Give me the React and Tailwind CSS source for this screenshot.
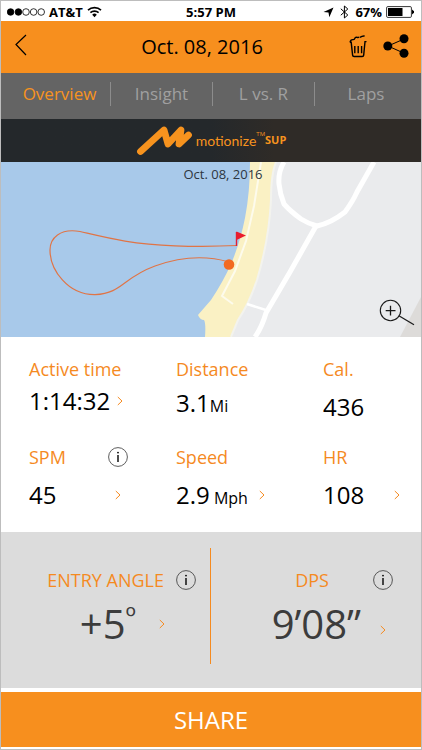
import React, { useState } from 'react';

/* ─── Data ──────────────────────────────────────────────────── */
const TABS = ['Overview', 'Insight', 'L vs. R', 'Laps'];

const METRICS = [
  { label: 'Active time', value: '1:14:32', link: true, cell: 'pr-12', gap: 'gap-0' },
  { label: 'Distance', value: '3.1', unit: 'Mi', cell: 'pr-[51px]', gap: 'gap-0.5' },
  { label: 'Cal.', value: '436', cell: 'pr-3.5', gap: 'gap-1.5' },
  { label: 'SPM', value: '45', info: true, link: true, cell: 'pr-12', gap: 'gap-1.5' },
  { label: 'Speed', value: '2.9', unit: ' Mph', link: true, cell: 'pr-[51px]', gap: 'gap-1.5' },
  { label: 'HR', value: '108', link: true, cell: 'pr-3.5', gap: 'gap-1.5' },
];

/* ─── Icons ─────────────────────────────────────────────────── */
const WifiIcon = () => (
  <svg width="15" height="12" viewBox="0 0 15 12" fill="none" stroke="black" strokeWidth="1.6">
    <path d="M1 4.2a9.4 9.4 0 0 1 13 0" />
    <path d="M3.4 6.7a6 6 0 0 1 8.2 0" />
    <path d="M7.5 11.2 5.2 8.7a3.3 3.3 0 0 1 4.6 0z" fill="black" stroke="none" />
  </svg>
);

const LocationIcon = () => (
  <svg width="11" height="11" viewBox="0 0 11 11">
    <path d="M10.5.5 6.3 10.3 5.5 5.6.5 5z" fill="black" />
  </svg>
);

const BluetoothIcon = () => (
  <svg width="9" height="14" viewBox="0 0 9 14" fill="none" stroke="black" strokeWidth="1">
    <path d="M.8 3.8 7.8 10 4.4 13V1l3.4 3-7 6.2" />
  </svg>
);

const BatteryIcon = () => (
  <svg width="29" height="12" viewBox="0 0 29 12">
    <rect x=".6" y=".6" width="24.8" height="10.8" rx="1.2" fill="white" stroke="black" strokeWidth=".8" />
    <rect x="2" y="2" width="14.5" height="8" fill="black" />
    <path d="M26.5 4.2a2 2 0 0 1 0 3.6z" fill="black" stroke="black" />
  </svg>
);

const BackIcon = () => (
  <svg width="12" height="22" viewBox="0 0 12 22" fill="none" stroke="black" strokeWidth="1.2">
    <path d="M11 1 1 10.5 11 21" />
  </svg>
);

const TrashIcon = () => (
  <svg width="18" height="24" viewBox="0 0 18 24" fill="none" stroke="black" strokeWidth="1.4">
    <path d="M.8 8.3h1.4l1.4 12.8q.1 1.4 1.5 1.4h8.1q1.4 0 1.5-1.4L16 7.6h1.5" />
    <path d="M1.2 8q.3-2.5 2.7-2.4 1.7.2 1.9-1.2.6-1.7 2.5-1 1 .5 1.9-.5" />
    <path d="M11 3.4q2.2-1.7 4.6-1.4" />
    <path d="M5.8 12v7.3M9.2 12v7.3M12.6 12v7.3" />
  </svg>
);

const ShareIcon = () => (
  <svg width="26" height="24" viewBox="0 0 26 24">
    <path d="M21 5 5 12l16 7.2" fill="none" stroke="black" strokeWidth="1" />
    <circle cx="4.8" cy="12" r="4.5" />
    <circle cx="21" cy="4.8" r="4.5" />
    <circle cx="21" cy="19.2" r="4.5" />
  </svg>
);

const MotionizeMark = () => (
  <svg width="58" height="31" viewBox="0 0 58 31" fill="none" stroke="#f7931e" strokeLinejoin="round" strokeLinecap="round">
    <path d="M4.500 26.500 28 5l4 14L45 5l-2 14 9.500-9" strokeWidth="6.800" />
  </svg>
);

const ChevronIcon = () => (
  <svg width="6" height="10" viewBox="0 0 6 10" fill="none" stroke="#f58a1f" strokeWidth="1">
    <path d="M.8 1 5 5 .8 9" />
  </svg>
);

const InfoIcon = () => (
  <svg width="20" height="20" viewBox="0 0 20 20" fill="none" stroke="#333">
    <circle cx="10" cy="10" r="9.4" strokeWidth=".8" />
    <path d="M10 8v7" stroke="black" strokeWidth="1.4" />
    <circle cx="10" cy="5.6" r=".9" fill="black" stroke="none" />
  </svg>
);

const ZoomIcon = () => (
  <svg width="36" height="28" viewBox="0 0 36 28" fill="none" stroke="#1a1a1a">
    <circle cx="11.5" cy="11.5" r="10.2" strokeWidth="1.1" />
    <path d="M11.5 6.7v9.8M6.7 11.6h9.8" strokeWidth="1.3" />
    <path d="M20.3 17 35 25.7" strokeWidth="1.3" />
  </svg>
);

/* ─── Small controls ────────────────────────────────────────── */
const DetailsButton = ({ label }) => (
  <button className="flex w-5 h-5 shrink-0 items-center justify-center" aria-label={`${label} details`}>
    <ChevronIcon />
  </button>
);

const InfoButton = ({ label }) => (
  <button className="shrink-0" aria-label={`About ${label}`}>
    <InfoIcon />
  </button>
);

/* ─── Status bar ────────────────────────────────────────────── */
const StatusBar = () => (
  <div className="grid grid-cols-3 items-center h-5 px-1.5 pt-0.5 text-[13px] leading-4 font-bold text-black">
    <div className="flex items-center gap-1">
      <svg width="38" height="8" viewBox="0 0 38 8" stroke="black" strokeWidth=".8">
        {[3.6, 11.4, 19, 26.6, 34.2].map((x, i) => (
          <circle key={x} cx={x} cy="4" r="3.3" fill={i < 2 ? 'black' : 'white'} />
        ))}
      </svg>
      <span>AT&amp;T</span>
      <span><WifiIcon /></span>
    </div>
    <span className="text-center">5:57 PM</span>
    <div className="flex items-center justify-end gap-1">
      <LocationIcon />
      <span className="mx-0.5"><BluetoothIcon /></span>
      <span>67%</span>
      <BatteryIcon />
    </div>
  </div>
);

/* ─── Map ───────────────────────────────────────────────────── */
const SessionMap = () => (
  <div className="relative">
    <svg className="block w-full" viewBox="1 162 420 175" role="img" aria-label="Session route">
      <rect x="1" y="162" width="420" height="175" fill="#a8c9ea" />
      <path d="M250 162q0 30-5 56-5 25-14 46-8 18-20 36-7 8-13 15 2 5 6 5 2 3 1 17h216V162z" fill="#faf1c4" />
      <path d="M276 162q-4 12-5 38-2 40-14 80-8 24-19 40l-6 17h189V162z" fill="#eaebed" />
      <path d="M276 162q-5 12-5 38-2 40-14 80-8 24-19 40l-7 17" fill="none" stroke="#f3f3ee" strokeWidth="2" />
      <path d="M261 162l-7 44-8 35-11 30-13 25 11 8" fill="none" stroke="#fdfbec" strokeWidth="2" />
      <path d="M400 337l21-40v40z" fill="#dddbd9" />
      <g fill="none" stroke="white">
        <path d="M284 162q-6 10-5 22 1 10 5 20 6 7 17 15 8 5 16 7 14-3 28-14 8-11 12-20l17-30" strokeWidth="5" />
        <path d="M316 226 290 272 266 313q-4 14-11 24" strokeWidth="5" />
        <path d="M247 304l22 7" strokeWidth="2.5" />
      </g>
      <path
        d="M237 245.5Q205 247 175 245.8C130 244 108 238 80 231.5C60 228 50 238 50 250C50 270 68 295 95 294.7C123 293 122 278 155 266C180 257 205 255 229 262"
        fill="none"
        stroke="#e07446"
        strokeWidth="1.2"
      />
      <circle cx="229" cy="264.5" r="5.3" fill="#f26a21" />
      <path d="M236.5 232v14" stroke="#e01f35" strokeWidth="1.4" />
      <path d="M236.5 231.5l9.5 4-9.5 4.5z" fill="#ea1c2d" />
    </svg>
    <p className="absolute inset-x-0 top-0.5 pl-6 text-center text-[13px] leading-5 text-[#2c3540]">Oct. 08, 2016</p>
    <button className="absolute right-1.5 bottom-2.5" aria-label="Zoom in">
      <ZoomIcon />
    </button>
  </div>
);

/* ─── Metric cell ───────────────────────────────────────────── */
const Metric = ({ label, value, unit, info, link, cell, gap }) => (
  <div className={`flex min-w-0 flex-col ${cell} ${gap}`}>
    <div className="flex h-8 items-center justify-between">
      <h2 className="text-lg text-[#f58a1f] whitespace-nowrap">{label}</h2>
      {info && <InfoButton label={label} />}
    </div>
    <div className="flex h-8 items-center justify-between">
      <p className="text-2xl text-black whitespace-pre">
        {value}
        {unit && <span className="text-base">{unit}</span>}
      </p>
      {link && <DetailsButton label={label} />}
    </div>
  </div>
);

/* ─── App ───────────────────────────────────────────────────── */
const App = () => {
  const [tab, setTab] = useState('Overview');

  return (
    <main className="border border-[#bdbdbd] bg-white font-['Open_Sans','Noto_Sans',sans-serif]">
      <StatusBar />

      <header className="flex items-center h-[52px] pl-3.5 pr-3 bg-[#f78f1e]">
        <button className="w-10 pb-1" aria-label="Back"><BackIcon /></button>
        <h1 className="flex-1 text-center text-xl text-black">Oct. 08, 2016</h1>
        <div className="flex items-center justify-end gap-4 pb-0.5">
          <button aria-label="Delete"><TrashIcon /></button>
          <button aria-label="Share session"><ShareIcon /></button>
        </div>
      </header>

      <nav className="grid grid-cols-4 items-center h-[46px] pl-2 pr-1 pb-1 bg-[#646464] divide-x divide-[#8c8c8c]">
        {TABS.map(name => (
          <button
            key={name}
            onClick={() => setTab(name)}
            className={`h-6 text-[17px] leading-6 ${tab === name ? 'text-[#f7931e]' : 'text-[#a0a0a0]'}`}
          >
            {name}
          </button>
        ))}
      </nav>

      <div className="flex h-[43px] items-center justify-center bg-linear-to-r from-[#24282b] from-50% to-[#2f2b27] to-65% text-[#f7931e]">
        <MotionizeMark />
        <span className="ml-0.5 font-['Lato',sans-serif] text-sm">motionize</span>
        <span className="mb-3 text-[6px]">TM</span>
        <span className="text-[11px] font-bold">SUP</span>
      </div>

      <SessionMap />

      <section className="grid grid-cols-[3fr_3fr_2fr] gap-y-[18px] pl-7 pt-4 pb-[21px]">
        {METRICS.map(metric => <Metric key={metric.label} {...metric} />)}
      </section>

      <section className="grid grid-cols-2 pt-4 pb-6 bg-[#dcdcdc]">
        <div className="flex h-[116px] flex-col items-end border-r border-[#f58a1f] pt-4 pr-3.5">
          <div className="flex h-8 items-center gap-3">
            <h2 className="text-lg text-[#f58a1f] whitespace-nowrap">ENTRY ANGLE</h2>
            <InfoButton label="entry angle" />
          </div>
          <div className="flex h-14 items-center gap-4 pr-6">
            <p className="flex items-start text-[40px] leading-none text-[#3c3c3c]">
              +5<span className="text-[28px] leading-6">º</span>
            </p>
            <DetailsButton label="Entry angle" />
          </div>
        </div>
        <div className="flex h-[116px] flex-col items-end pt-4 pr-7">
          <div className="flex h-8 items-center gap-11">
            <h2 className="text-lg text-[#f58a1f]">DPS</h2>
            <InfoButton label="DPS" />
          </div>
          <div className="flex h-14 items-center gap-3">
            <p className="text-[40px] leading-none text-[#3c3c3c]">9’08”</p>
            <span className="pt-3"><DetailsButton label="DPS" /></span>
          </div>
        </div>
      </section>

      <button className="mt-1 mb-0.5 block h-[55px] w-full bg-[#f78f1e] text-2xl text-white">SHARE</button>
    </main>
  );
};

export default App;
